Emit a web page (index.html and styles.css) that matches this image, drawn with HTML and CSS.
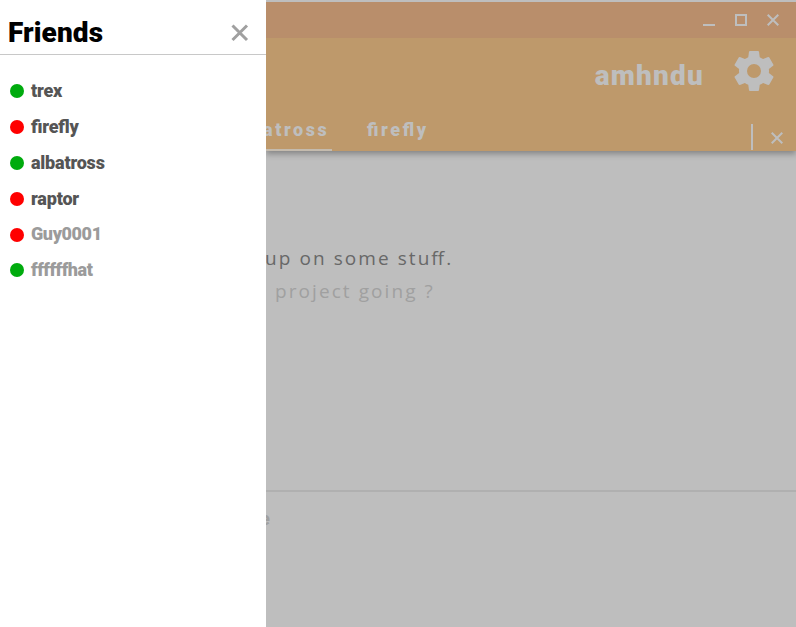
FILE: index.html
```html
<!DOCTYPE html>
<html lang="en">
<head>
<meta charset="utf-8">
<title>Friends</title>
<link rel="stylesheet" href="styles.css">
</head>
<body>
<div class="app">
  <aside class="drawer">
    <header class="drawer-head">
      <h1>Friends</h1>
      <svg class="drawer-close" width="20" height="20" viewBox="0 0 20 20"><path d="M2.500 2.500 17 17M17 2.500 2.500 17"/></svg>
    </header>
    <ul class="friends">
      <li><i class="dot on"></i><span>trex</span></li>
      <li><i class="dot"></i><span>firefly</span></li>
      <li><i class="dot on"></i><span>albatross</span></li>
      <li><i class="dot"></i><span>raptor</span></li>
      <li class="muted"><i class="dot"></i><span>Guy0001</span></li>
      <li class="muted last"><i class="dot on"></i><span>ffffffhat</span></li>
    </ul>
  </aside>
  <main class="window">
    <div class="titlebar">
      <svg width="12" height="12" viewBox="0 0 12 12"><path d="M0 11H12"/></svg>
      <svg width="12" height="12" viewBox="0 0 12 12"><path d="M1 1H11V11H1Z"/></svg>
      <svg width="12" height="12" viewBox="0 0 12 12"><path d="M.7.7 11.3 11.3M11.3.7.7 11.3"/></svg>
    </div>
    <div class="toolbar">
      <div class="account">
        <span class="user">amhndu</span>
        <svg class="gear" width="48" height="48" viewBox="0 0 24 24"><path d="M12 15.5A3.5 3.5 0 0 1 8.5 12 3.5 3.5 0 0 1 12 8.5a3.5 3.5 0 0 1 3.5 3.5 3.5 3.5 0 0 1-3.500 3.500m7.430-2.530c.04-.32.07-.64.07-.97 0-.33-.03-.66-.07-1l2.110-1.630c.19-.15.24-.42.12-.64l-2-3.460c-.12-.22-.39-.31-.61-.22l-2.490 1c-.52-.39-1.060-.73-1.690-.98l-.37-2.650A.506.506 0 0 0 14 2h-4c-.25 0-.46.18-.5.420l-.37 2.650c-.63.250-1.170.59-1.690.98l-2.490-1c-.22-.09-.49 0-.61.220l-2 3.460c-.13.220-.07.490.12.640L4.570 11c-.04.340-.07.670-.07 1 0 .330.03.650.07.970l-2.110 1.660c-.19.150-.25.420-.12.640l2 3.460c.12.220.39.300.61.220l2.490-1.010c.52.400 1.060.740 1.690.990l.37 2.650c.04.240.25.420.5.420h4c.25 0 .46-.18.500-.420l.37-2.650c.63-.260 1.170-.590 1.690-.990l2.490 1.010c.22.080.49 0 .61-.220l2-3.460c.12-.220.07-.490-.12-.640l-2.110-1.660Z"/></svg>
      </div>
      <nav class="tabs">
        <span class="tab active">atross</span>
        <span class="tab">firefly</span>
        <span class="divider"></span>
        <svg class="tab-close" width="12" height="12" viewBox="0 0 12 12"><path d="M.7.7 11.3 11.3M11.3.7.7 11.3"/></svg>
      </nav>
    </div>
    <section class="chat">
      <p class="msg">up on some stuff.</p>
      <p class="msg faded">project going ?</p>
    </section>
    <footer class="composer"><span>e</span></footer>
  </main>
</div>
</body>
</html>
```

FILE: styles.css
```css
* { box-sizing: border-box; }
body { margin: 0; font-family: Roboto, sans-serif; }
.app { display: grid; grid-template-columns: 266px 1fr; height: 627px; overflow: hidden; }

.drawer { background: #fff; }
.drawer-head {
  display: flex; align-items: center; justify-content: space-between;
  height: 55px; padding: 11px 16px 0 8px; border-bottom: 1px solid #c8c8c8;
}
h1 { margin: 0; font-size: 28px; line-height: 34px; font-weight: 900; letter-spacing: .1px; color: #000; }
.drawer-close { fill: none; stroke: #a0a0a0; stroke-width: 3; }
.friends { list-style: none; margin: 0; padding: 18px 0 0 10px; }
.friends li {
  display: flex; align-items: center; gap: 7px; height: 36px;
  font-size: 18px; font-weight: 900; letter-spacing: -.2px;
  font-feature-settings: "liga" 1; color: #555;
}
.friends span { margin-top: -2px; }
.friends .muted { color: #9b9b9b; letter-spacing: -.4px; }
.friends .muted:not(.last) { height: 35px; }
.dot { width: 14px; height: 14px; border-radius: 50%; background: #f00; }
.dot.on { background: #00ab0e; }

.window {
  display: flex; flex-direction: column; min-width: 0; overflow: hidden;
  background: #bebebe; border-top: 2px solid #bebebe;
}
.titlebar {
  display: flex; justify-content: flex-end; gap: 20px; height: 36px;
  padding: 12px 17px 0 0; background: #b98e6b;
}
.titlebar svg, .tab-close { fill: none; stroke: #bebebe; stroke-width: 2; }
.toolbar {
  display: flex; flex-direction: column; height: 113px;
  background: #be996b; box-shadow: 0 3px 6px rgba(0, 0, 0, .3);
  clip-path: inset(0 0 -12px 0);
}
.account { display: flex; justify-content: flex-end; height: 72px; padding: 9px 18px 0 0; color: #bebebe; }
.user { margin: 12px 26px 0 0; font-size: 28px; line-height: 34px; font-weight: 900; letter-spacing: 1.2px; }
.gear { fill: #bebebe; }
.tabs { display: flex; height: 41px; color: #bebebe; }
.tab {
  height: 41px; padding-top: 8px; font-size: 18px; line-height: 24px; font-weight: 900;
  letter-spacing: 2.6px; font-feature-settings: "liga" 1;
}
.tab.active { width: 66px; margin-right: 35px; height: 41px; border-bottom: 2px solid #c4bbae; text-indent: -3px; }
.divider { width: 2px; height: 26px; margin: 14px 14px 0 auto; background: #bebebe; }
.tab-close { margin: 22px 13px 0 4px; }
.chat {
  height: 339px; padding-top: 91px; font-family: "Open Sans", sans-serif;
  font-size: 19px; letter-spacing: 2.07px; font-feature-settings: "liga" 1;
}
.msg { margin: 0; line-height: 33px; color: #686868; text-indent: -1px; }
.faded { padding-left: 10px; color: #a0a0a0; }
.composer {
  flex: 1; padding-top: 15px; border-top: 2px solid #b0b0b0;
  font-size: 18px; line-height: 24px; font-weight: 900; color: #a0a0a0;
}
.composer span { margin-left: -6px; }
```
